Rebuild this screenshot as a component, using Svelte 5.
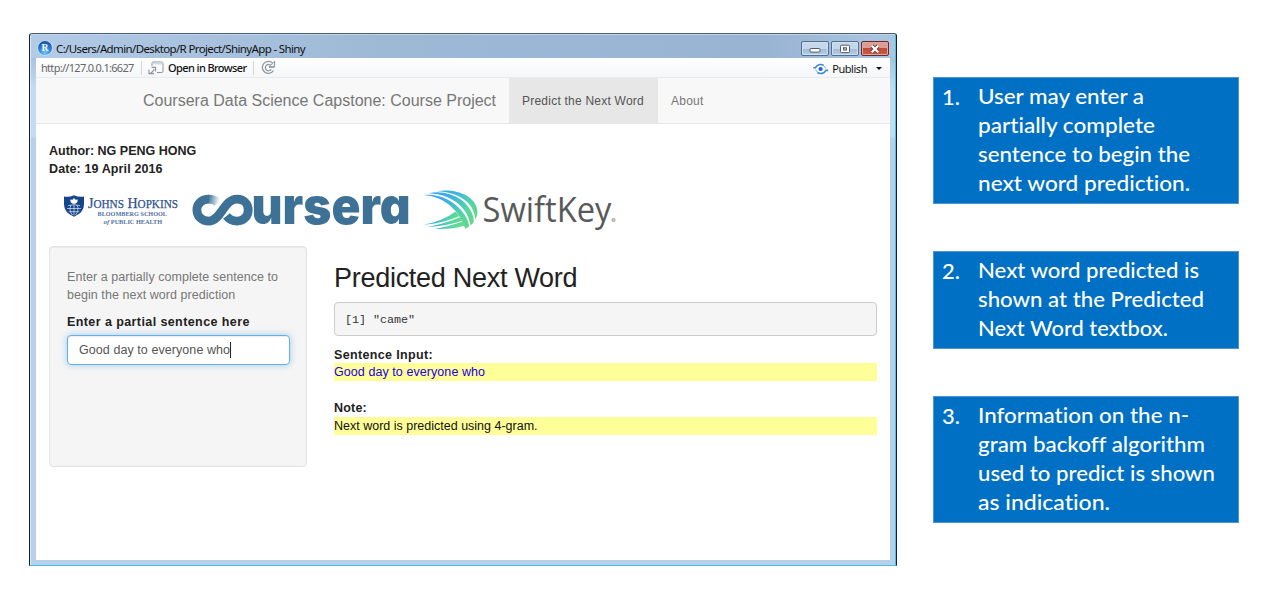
<script>
  const notes = [
    { lines: ['User may enter a', 'partially complete', 'sentence to begin the', 'next word prediction.'], widths: [166, 177, 212, 212] },
    { lines: ['Next word predicted is', 'shown at the Predicted', 'Next Word textbox.'], widths: [221, 226, 190] },
    { lines: ['Information on the n-', 'gram backoff algorithm', 'used to predict is shown', 'as indication.'], widths: [211, 227, 237, 132] }
  ];
</script>

<div class="slide">
  <main class="window">
    <header class="titlebar">
      <svg class="rlogo" width="16" height="16" viewBox="0 0 16 16">
        <defs>
          <radialGradient id="ball" cx=".5" cy=".8" r=".75">
            <stop offset="0" stop-color="#6cc8f8" /><stop offset=".6" stop-color="#2b7bd0" /><stop offset="1" stop-color="#174f9c" />
          </radialGradient>
        </defs>
        <circle cx="8" cy="8" r="7.4" fill="url(#ball)" stroke="#dcecf8" stroke-width=".8" />
        <text x="4.6" y="11.3" font-family="Liberation Serif, serif" font-weight="700" font-size="9.5" fill="#fff">R</text>
      </svg>
      <span class="title">C:/Users/Admin/Desktop/R Project/ShinyApp - Shiny</span>
      <div class="controls">
        <i class="ctl"><svg width="12" height="10" viewBox="0 0 12 10"><rect x="1" y="4.5" width="10" height="3.6" rx="1" fill="#fff" stroke="#555d68" /></svg></i>
        <i class="ctl"><svg width="12" height="10" viewBox="0 0 12 10"><rect x="1.5" y="1.2" width="9" height="7.4" rx="1" fill="#fff" stroke="#555d68" /><rect x="4.5" y="3.7" width="3" height="2.4" fill="#9eb6d0" stroke="#555d68" stroke-width=".9" /></svg></i>
        <i class="ctl close"><svg width="12" height="10" viewBox="0 0 12 10"><path d="M3 1.8 9 8.2M9 1.8 3 8.2" stroke="#5b3b46" stroke-width="4" /><path d="M2.8 1.8 9.2 8.2M9.2 1.8 2.8 8.2" stroke="#fff" stroke-width="2.3" /></svg></i>
      </div>
    </header>
    <div class="client">
      <div class="toolbar">
        <span class="url">http://127.0.0.1:6627</span>
        <i class="sep"></i>
        <svg class="open" width="16" height="14" viewBox="0 0 16 14" fill="none">
          <path d="M4 5V2.2Q4 1 5.2 1h8.3Q15 1 15 2.5v7.7q0 1.3-1.3 1.3H9" stroke="#8b9299" />
          <path d="M4.5 1.5h10v2h-10z" fill="#d3dbe1" />
          <path d="M1.2 12.5q3-.4 5-4.6M3.6 6.4h4v4M1 8.8v3.8h5" stroke="#8b9299" stroke-width="1.1" />
        </svg>
        <span class="openText">Open in Browser</span>
        <i class="sep"></i>
        <svg class="reload" width="15" height="15" viewBox="0 0 15 15" fill="none">
          <path d="M12.5 10.5A6 6 0 1 1 11.5 3" stroke="#8b959d" stroke-width="1.2" />
          <path d="M10.2 9.4A3.2 3.2 0 1 1 9.4 5" stroke="#8b959d" stroke-width="1.2" />
          <path d="M13.6 1.2v5.6H8zM8 7.3h5.5" stroke="#8b959d" fill="#e9eef1" />
        </svg>
        <div class="publish">
          <svg width="16" height="12" viewBox="0 0 16 12" fill="none" stroke="#4087cf" stroke-width="1.6">
            <circle cx="7.6" cy="6" r="2.1" fill="#2068c8" stroke="none" />
            <path d="M.3 4.7h2.1C4 1.5 7.6.5 10.7 2.5M15.2 7.4h-2.3C11.2 10.6 7.6 11.4 4.4 9.5" />
            <path d="M11.1 3.2q1.2 1 1.3 2.2M4 8.8Q3.1 8 2.9 6.8" stroke-width=".8" />
          </svg>
          <span>Publish</span><b class="caret"></b>
        </div>
      </div>
      <nav>
        <span class="brand">Coursera Data Science Capstone: Course Project</span>
        <span class="tab active">Predict the Next Word</span>
        <span class="tab">About</span>
      </nav>
      <section class="content">
        <div class="author"><span>Author: NG PENG HONG</span><br /><span class="date">Date: 19 April 2016</span></div>
        <div class="logos">
          <svg width="570" height="50" viewBox="50 185 570 50">
            <defs>
              <linearGradient id="swoosh" x1="424" y1="190" x2="470" y2="228" gradientUnits="userSpaceOnUse">
                <stop offset="0" stop-color="#3ca2f5" /><stop offset=".4" stop-color="#3daee8" /><stop offset=".75" stop-color="#55d5a3" /><stop offset="1" stop-color="#62da88" />
              </linearGradient>
              <linearGradient id="swoosh2" x1="424" y1="224" x2="465" y2="224" gradientUnits="userSpaceOnUse">
                <stop offset="0" stop-color="#37a5ef" /><stop offset=".65" stop-color="#58d5a6" /><stop offset="1" stop-color="#66dc85" />
              </linearGradient>
              <linearGradient id="fade" x1="208" y1="199" x2="219" y2="201" gradientUnits="userSpaceOnUse">
                <stop offset="0" stop-color="#3d7195" /><stop offset="1" stop-color="#3d7195" stop-opacity=".05" />
              </linearGradient>
            </defs>
            <path d="M64 196.5q5 1 10-1.2 5 2.2 10 1.2v8q0 8-10 12.3-10-4.3-10-12.3z" fill="#15458b" />
            <path d="M74 198l1.5 1.8 2.2-.2-.4 2.6-2 1.6h-2.6l-2-1.6-.4-2.6 2.2.2z" fill="#fff" />
            <g fill="none" stroke="#e2eaf3" stroke-width=".7"><path d="M67 208.5h14M68.7 211.7h10.6M68 205.7q6-2 12 0M74 204.8v10.5M71 205.1q-2.5 5 1.5 10M77 205.1q2.5 5-1.5 10" /></g>
            <g font-family="Liberation Serif, serif" fill="#2d508e">
              <text x="88" y="208" font-size="15" stroke="#2d508e" stroke-width=".25" textLength="90" lengthAdjust="spacingAndGlyphs">J<tspan font-size="12">OHNS</tspan> H<tspan font-size="12">OPKINS</tspan></text>
              <text x="97.5" y="216.3" font-size="6.3" textLength="69.5" lengthAdjust="spacingAndGlyphs" font-weight="700" fill="#5370a3">BLOOMBERG SCHOOL</text>
              <text x="103.5" y="223.5" font-size="6.3" textLength="58.5" lengthAdjust="spacingAndGlyphs" font-weight="700" fill="#5370a3"><tspan font-style="italic" font-size="7">of</tspan> PUBLIC HEALTH</text>
            </g>
            <g fill="none" stroke="#3d7195" stroke-width="8.8">
              <path d="M209 199.2C202 199 196.9 203.5 196.9 210S202 221.1 209 221.1C221 221.1 223.5 199.2 237 199.2C243.8 199.2 248.2 204 248.2 210S243.8 221.1 237 221.1C232.5 221.1 229 219 226.5 216" />
              <path d="M208.5 199.2q5.8 0 9.4 3.4" stroke="url(#fade)" />
            </g>
            <text class="wordmark" x="251.5" y="223.8" font-family="Inter, sans-serif" font-weight="900" font-size="51" fill="#3d7195" textLength="159" lengthAdjust="spacingAndGlyphs">ursera</text>
            <g fill="url(#swoosh)">
              <path d="M437 191.2C456 188 477 196 477.5 212Q477.3 216 475.3 219.5C474.5 203 459 192 437 191.2Z" />
              <path d="M429 193.2C449 189 472 201 474 221.2Q472.8 223.8 470.5 225.2C468 209 454 194.5 429 193.2Z" />
              <path d="M423.5 195C444 192 466 208 469.3 226Q467.5 228 465.2 228.8C461 214 447 196.5 423.5 195Z" />
            </g>
            <g fill="url(#swoosh2)">
              <path d="M423.5 224.7Q442 221.5 455.3 211.8Q458 214 459.2 216.2Q443 223.3 423.5 224.7Z" />
              <path d="M427 227Q445 223.6 459.9 217.2L462.5 220.8Q447 226.2 427 227Z" />
              <path d="M435 229Q450 226.2 463 221.6L465 225.5Q452 229.7 435 229Z" />
            </g>
            <text x="482.5" y="222" font-family="Open Sans, sans-serif" font-size="34" fill="#58595b" textLength="129" lengthAdjust="spacingAndGlyphs">SwiftKey</text>
            <circle cx="613.5" cy="220" r="1.7" fill="#c4c4c5" stroke="#969696" stroke-width=".6" />
          </svg>
        </div>
        <div class="columns">
          <aside>
            <p><span class="help">Enter a partially complete sentence to</span><br />begin the next word prediction</p>
            <label for="sentence">Enter a partial sentence here</label>
            <div class="field" id="sentence"><span>Good day to everyone who</span><i></i></div>
          </aside>
          <article>
            <h2>Predicted Next Word</h2>
            <pre>[1] "came"</pre>
            <h4 class="si">Sentence Input:</h4>
            <div class="mark blue"><span>Good day to everyone who</span></div>
            <h4 class="note">Note:</h4>
            <div class="mark"><span>Next word is predicted using 4-gram.</span></div>
          </article>
        </div>
      </section>
    </div>
  </main>
  <aside class="notes">
    {#each notes as note, n}
      <section class="callout">
        <span class="num">{n + 1}.</span>
        <div>
          {#each note.lines as line, i}
            <svg width="245" height="29"><text x="0" y="22" textLength={note.widths[i]} lengthAdjust="spacingAndGlyphs">{line}</text></svg>
          {/each}
        </div>
      </section>
    {/each}
  </aside>
</div>

<style>
  :global(body) { background: #fff; }
  .slide { box-sizing: border-box; width: 1277px; height: 601px; padding: 33px 0 0 29px; display: flex; gap: 36px; overflow: hidden; font-family: "Liberation Sans", Arial, sans-serif; }
  .slide * { box-sizing: border-box; }
  .window { width: 868px; height: 533px; flex: none; border: 1px solid #15202c; border-top-color: #4d5f73; border-bottom-color: #3cc5dc; border-radius: 3px 3px 0 0; padding: 0 6px 5px; background: linear-gradient(#9ab5d3 0, #a9c3df 24px, #c4dcf3 55px, #c4dcf3 103px, #b9d0ea 104px); box-shadow: inset 1px 0 #dbe8f5, inset -1px 0 #42c7df; }
  .titlebar { height: 24px; margin: 0 -5px; padding-left: 6px; display: flex; align-items: center; background: linear-gradient(90deg, #b2cbe7, #9eb9d6 40%, #98b4d2 85%, #acc6e1); border-top: 1px solid #c0d5ea; }
  .rlogo { flex: none; margin: 3px 3px 0 0; }
  .title { font: 11.5px "Noto Sans", sans-serif; color: #111; white-space: nowrap; width: 250px; letter-spacing: -.63px; padding-top: 3px; }
  .controls { display: flex; gap: 2px; margin: 4px 6px 0 auto; }
  .ctl { width: 28px; height: 15px; border: 1px solid #536f8f; border-radius: 2px; display: flex; align-items: center; justify-content: center; background: linear-gradient(#c4d7eb 50%, #a0bad6 50%, #b4cde6); box-shadow: inset 0 0 0 1px #cfe0f0; }
  .close { background: linear-gradient(#df9d91 45%, #c04b36 50%, #c95d46); border-color: #692833; box-shadow: inset 0 0 0 1px #dda99f; }
  .client { height: 502px; background: #fff; overflow: hidden; }
  .toolbar { height: 20px; display: flex; align-items: center; padding-left: 5px; background: linear-gradient(#fff, #f4f6f8); border-bottom: 1px solid #e9ebed; font: 11px "Noto Sans", sans-serif; white-space: nowrap; }
  .url { color: #666; width: 100px; letter-spacing: -.7px; }
  .sep { width: 1px; height: 14px; background: #d4d7da; flex: none; }
  .open { flex: none; margin: 0 4px 0 6px; }
  .openText { width: 85px; letter-spacing: -.6px; color: #111; font-weight: 500; }
  .reload { margin-left: 7px; }
  .publish { margin: 2px 8px 0 auto; display: flex; align-items: center; gap: 3px; color: #111; }
  .publish span { letter-spacing: -.45px; }
  .caret { border: 3px solid transparent; border-top: 3.5px solid #111; border-bottom: 0; margin-left: 6px; }
  nav { height: 46px; display: flex; align-items: center; background: #f8f8f8; border-bottom: 1px solid #e7e7e7; color: #777; white-space: nowrap; padding-left: 107px; }
  .brand { font-size: 16px; width: 366px; }
  .tab { align-self: stretch; width: 149px; padding-left: 13px; line-height: 46px; font-size: 12px; letter-spacing: .23px; }
  .active { background: #e7e7e7; color: #555; }
  .content { padding: 18px 13px 0; color: #222; }
  .author { font-size: 12.5px; font-weight: 700; line-height: 18px; }
  .date { letter-spacing: .12px; }
  .logos { height: 50px; margin-top: 7px; }
  .logos svg { display: block; overflow: visible; margin-left: 1px; }
  .wordmark { font-feature-settings: "cv11"; }
  .columns { display: flex; gap: 27px; margin-top: 11px; }
  .columns aside { width: 258px; height: 221px; border: 1px solid #e3e3e3; border-radius: 4px; background: #f5f5f5; padding: 21px 17px; box-shadow: inset 0 1px 1px #0000000d; font-size: 12.5px; }
  p { margin: 0 0 9px; color: #777; line-height: 18px; white-space: nowrap; letter-spacing: .05px; }
  label { display: block; font-weight: 700; line-height: 18px; letter-spacing: .41px; white-space: nowrap; }
  .field { height: 30px; margin-top: 4px; padding-left: 11px; display: flex; align-items: center; border: 1px solid #66afe9; border-radius: 4px; background: #fff; color: #555; box-shadow: inset 0 1px 1px #00000013, 0 0 7px #66afe999; white-space: nowrap; width: 223px; letter-spacing: .07px; }
  .field i { width: 1px; height: 16px; background: #222; }
  article { width: 543px; padding-top: 16px; font-size: 12.5px; }
  h2 { margin: 0 0 8px; font-size: 27px; line-height: 32px; font-weight: 400; color: #222; white-space: nowrap; letter-spacing: -.28px; }
  pre { margin: 0 0 10px; height: 34px; padding: 10px; border: 1px solid #ccc; border-radius: 4px; background: #f5f5f5; color: #333; font: 11.7px/14px "Liberation Mono", monospace; }
  h4 { margin: 0; font-size: 12.5px; line-height: 18px; height: 17px; }
  .si { letter-spacing: .35px; }
  .note { margin-top: 18px; height: 18px; letter-spacing: .2px; }
  .mark { height: 18px; line-height: 18px; background: #ff9; white-space: nowrap; color: #111; }
  .blue { color: #1b00e0; letter-spacing: .07px; }
  .notes { padding-top: 44px; width: 306px; flex: none; }
  .callout { display: flex; background: #0070c4; color: #fff; border: 1px solid #4f94d0; padding: 4px 0 5px 8px; font: 500 22px/29px Lato, sans-serif; font-variant-ligatures: none; margin-bottom: 47px; }
  .num { width: 36px; flex: none; }
  .callout div { display: flex; flex-direction: column; }
  .callout svg { display: block; fill: #fff; }
</style>
